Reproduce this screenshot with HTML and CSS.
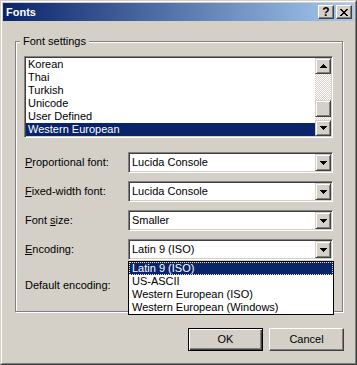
FILE: index.html
```html
<!doctype html>
<html lang="en">
    <head>
        <meta charset="UTF-8" />
        <meta name="viewport" content="width=device-width, initial-scale=1" />
        <link rel="stylesheet" href="styles.css">
        <title>Fonts</title>
    </head>
    <body>
        <div class="window">
            <div class="window-inner">
                <div class="titlebar">
                    <span class="title">Fonts</span>
                    <div class="caption-buttons">
                        <div class="caption-btn help">?</div>
                        <div class="caption-btn">
                            <svg width="8" height="7" viewBox="0 0 8 7">
                                <path d="M0 0h2v1h1v1h2V1h1V0h2v1H7v1H6v1H5v1h1v1h1v1h1v1H6V6H5V5H3v1H2v1H0V6h1V5h1V4h1V3H2V2H1V1H0z" />
                            </svg>
                        </div>
                    </div>
                </div>

                <div class="dialog-body">
                    <fieldset class="group">
                        <legend>Font settings</legend>

                        <div class="listbox">
                            <div class="list-items">
                                <div class="list-item">Korean</div>
                                <div class="list-item">Thai</div>
                                <div class="list-item">Turkish</div>
                                <div class="list-item">Unicode</div>
                                <div class="list-item">User Defined</div>
                                <div class="list-item selected">Western European</div>
                            </div>
                            <div class="scrollbar">
                                <div class="bevel-btn">
                                    <svg width="7" height="4" viewBox="0 0 7 4"><path d="M3 0h1v1h1v1h1v1h1v1H0V3h1V2h1V1h1z" /></svg>
                                </div>
                                <div class="track">
                                    <div class="thumb"></div>
                                </div>
                                <div class="bevel-btn">
                                    <svg width="7" height="4" viewBox="0 0 7 4"><path d="M0 0h7v1H6v1H5v1H4v1H3V3H2V2H1V1H0z" /></svg>
                                </div>
                            </div>
                        </div>

                        <div class="field-row first">
                            <label><u>P</u>roportional font:</label>
                            <div class="combo">
                                <span class="combo-value">Lucida Console</span>
                                <div class="bevel-btn combo-btn">
                                    <svg width="7" height="4" viewBox="0 0 7 4"><path d="M0 0h7v1H6v1H5v1H4v1H3V3H2V2H1V1H0z" /></svg>
                                </div>
                            </div>
                        </div>
                        <div class="field-row">
                            <label><u>F</u>ixed-width font:</label>
                            <div class="combo">
                                <span class="combo-value">Lucida Console</span>
                                <div class="bevel-btn combo-btn">
                                    <svg width="7" height="4" viewBox="0 0 7 4"><path d="M0 0h7v1H6v1H5v1H4v1H3V3H2V2H1V1H0z" /></svg>
                                </div>
                            </div>
                        </div>
                        <div class="field-row">
                            <label>Font <u>s</u>ize:</label>
                            <div class="combo">
                                <span class="combo-value">Smaller</span>
                                <div class="bevel-btn combo-btn">
                                    <svg width="7" height="4" viewBox="0 0 7 4"><path d="M0 0h7v1H6v1H5v1H4v1H3V3H2V2H1V1H0z" /></svg>
                                </div>
                            </div>
                        </div>
                        <div class="field-row">
                            <label><u>E</u>ncoding:</label>
                            <div class="combo">
                                <span class="combo-value">Latin 9 (ISO)</span>
                                <div class="bevel-btn combo-btn">
                                    <svg width="7" height="4" viewBox="0 0 7 4"><path d="M0 0h7v1H6v1H5v1H4v1H3V3H2V2H1V1H0z" /></svg>
                                </div>
                            </div>
                        </div>
                        <!-- combo of this row is covered by the open drop-down -->
                        <div class="field-row last">
                            <label>Default encoding:</label>
                            <div class="combo">
                                <span class="combo-value"></span>
                                <div class="bevel-btn combo-btn">
                                    <svg width="7" height="4" viewBox="0 0 7 4"><path d="M0 0h7v1H6v1H5v1H4v1H3V3H2V2H1V1H0z" /></svg>
                                </div>
                            </div>
                        </div>
                    </fieldset>

                    <div class="dialog-buttons">
                        <div class="push-btn default">OK</div>
                        <div class="push-btn">Cancel</div>
                    </div>
                </div>
            </div>

            <!-- open drop-down of the Encoding combo, lies over the form -->
            <div class="dropdown">
                <div class="dropdown-item selected">Latin 9 (ISO)</div>
                <div class="dropdown-item">US-ASCII</div>
                <div class="dropdown-item">Western European (ISO)</div>
                <div class="dropdown-item">Western European (Windows)</div>
            </div>
        </div>
    </body>
</html>
```

FILE: styles.css
```css
* {
    box-sizing: border-box;
}
html,
body {
    margin: 0;
    padding: 0;
}
body {
    font-family: "Liberation Sans", Arial, sans-serif;
    font-size: 11px;
    line-height: 13px;
    color: #000;
    background-color: #d4d0c8;
    overflow: hidden;
}

/* -- WINDOW FRAME -- */

.window {
    position: relative;
    width: 357px;
    height: 365px;
    background-color: #d4d0c8;
    border: 1px solid;
    border-color: #d4d0c8 #404040 #404040 #d4d0c8;
}
.window-inner {
    height: 100%;
    padding: 1px;
    border: 1px solid;
    border-color: #fff #808080 #808080 #fff;
    display: flex;
    flex-direction: column;
}
.titlebar {
    height: 18px;
    padding: 0 2px 0 3px;
    display: flex;
    align-items: center;
    justify-content: space-between;
    background: linear-gradient(to right, #0a246a, #a6caf0);
}
.title {
    color: #fff;
    font-weight: bold;
}
.caption-buttons {
    display: flex;
    gap: 2px;
}
.caption-btn {
    width: 16px;
    height: 14px;
    display: flex;
    align-items: center;
    justify-content: center;
    background-color: #d4d0c8;
    border: 1px solid;
    border-color: #fff #404040 #404040 #fff;
    box-shadow: inset -1px -1px #808080;
    font-weight: bold;
    font-size: 12px;
}
.caption-btn.help {
    padding-top: 1px;
}

/* -- DIALOG CONTENT -- */

.dialog-body {
    padding: 14px 11px 0 12px;
}
.group {
    margin: 0;
    width: 328px;
    min-width: 0;
    padding: 8px 9px 15px 8px;
    border: 1px solid #808080;
    box-shadow: inset 1px 1px #fff, 1px 1px #fff;
}
.group legend {
    padding: 0 3px;
    margin-left: -4px;
    background-color: #d4d0c8;
}

/* sunken 2px edge used by list and combos */
.listbox,
.combo {
    background-color: #fff;
    border: 1px solid;
    border-color: #808080 #fff #fff #808080;
    box-shadow: inset 1px 1px #404040, inset -1px -1px #d4d0c8;
    padding: 1px;
}
.listbox {
    width: 309px;
    height: 82px;
    display: flex;
}
.list-items {
    flex: 1;
}
.list-item {
    height: 13px;
    padding-left: 2px;
    white-space: nowrap;
}
.selected {
    background-color: #0a246a;
    color: #fff;
}

.bevel-btn {
    display: flex;
    align-items: center;
    justify-content: center;
    background-color: #d4d0c8;
    border: 1px solid;
    border-color: #d4d0c8 #404040 #404040 #d4d0c8;
    box-shadow: inset 1px 1px #fff, inset -1px -1px #808080;
}
.scrollbar {
    width: 16px;
    display: flex;
    flex-direction: column;
}
.scrollbar .bevel-btn {
    height: 16px;
}
.track {
    flex: 1;
    background: repeating-conic-gradient(#fff 0 25%, #d4d0c8 0 50%) 0 0 / 2px 2px;
}
.thumb {
    height: 17px;
    margin-top: 26px;
    background-color: #d4d0c8;
    border: 1px solid;
    border-color: #d4d0c8 #404040 #404040 #d4d0c8;
    box-shadow: inset 1px 1px #fff, inset -1px -1px #808080;
}

.field-row {
    display: grid;
    grid-template-columns: 104px 205px;
    align-items: center;
    margin-top: 8px;
}
.field-row.first {
    margin-top: 14px;
}
.field-row.last {
    margin-top: 15px;
}
.field-row label {
    padding-left: 1px;
}
.combo {
    height: 21px;
    display: flex;
    align-items: center;
}
.combo-value {
    flex: 1;
    padding-left: 2px;
    white-space: nowrap;
}
.combo-btn {
    width: 16px;
    height: 17px;
}

.dialog-buttons {
    margin-top: 16px;
    margin-right: -1px;
    display: flex;
    justify-content: flex-end;
    gap: 6px;
}
.push-btn {
    width: 75px;
    height: 23px;
    display: flex;
    align-items: center;
    justify-content: center;
    background-color: #d4d0c8;
    border: 1px solid;
    border-color: #fff #404040 #404040 #fff;
    box-shadow: inset -1px -1px #808080;
}
.push-btn.default {
    border-color: #000;
    box-shadow: inset 1px 1px #fff, inset -1px -1px #404040, inset -2px -2px #808080;
}

/* -- OPEN DROP-DOWN -- */

.dropdown {
    position: absolute;
    left: 127px;
    top: 260px;
    width: 206px;
    height: 54px;
    background-color: #fff;
    border: 1px solid #000;
}
.dropdown-item {
    height: 13px;
    padding-left: 3px;
    white-space: nowrap;
}
.dropdown-item.selected {
    outline: 1px dotted #f4e79c;
    outline-offset: -1px;
}
```
